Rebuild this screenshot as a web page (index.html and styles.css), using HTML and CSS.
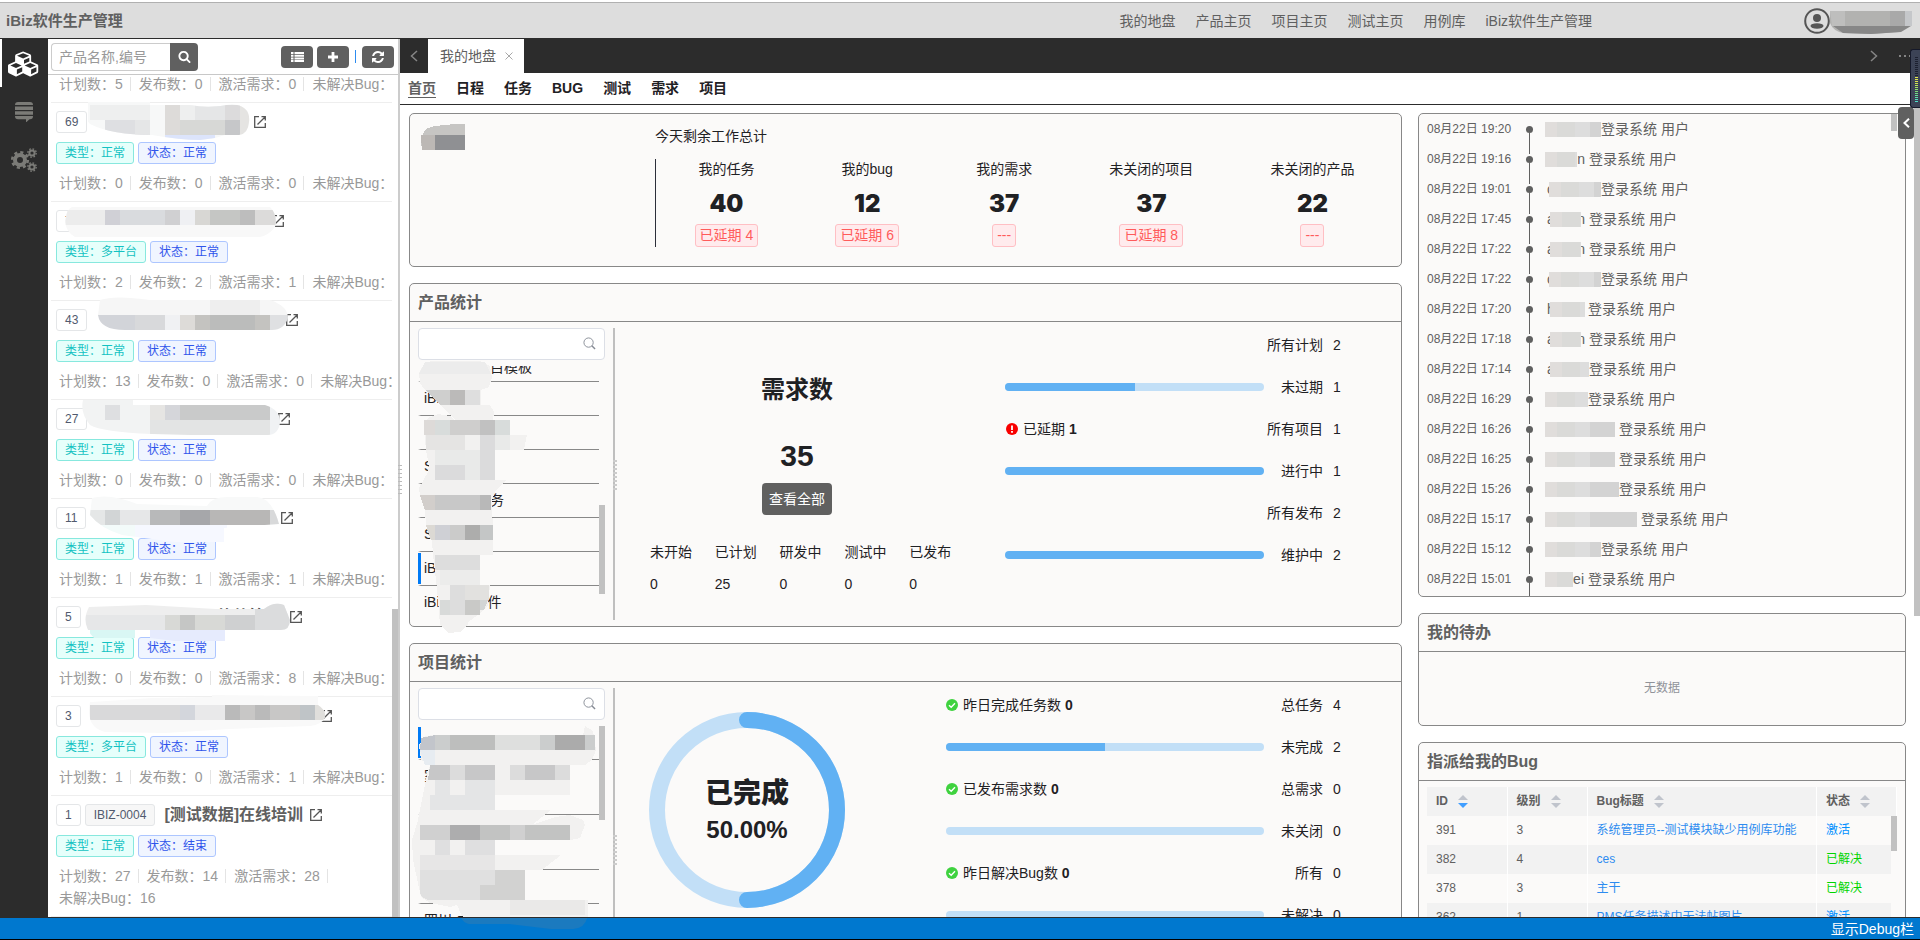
FILE: index.html
```html
<!DOCTYPE html>
<html lang="zh-CN">
<head>
<meta charset="utf-8">
<title>iBiz软件生产管理</title>
<link rel="stylesheet" href="styles.css">
</head>
<body>
<svg class="defs" width="0" height="0" aria-hidden="true">
  <defs>
    <symbol id="i-open" viewBox="0 0 12 12"><path d="M5 .7H.7v10.600h10.600V7M7.500.7h3.800v3.800M11.300.7 3.500 8.500" fill="none" stroke="currentColor" stroke-width="1.300"/></symbol>
    <symbol id="i-find" viewBox="0 0 14 14"><circle cx="6" cy="6" r="5" fill="none" stroke="currentColor"/><path d="M9.500 9.500 13 13" fill="none" stroke="currentColor" stroke-width="1.500"/></symbol>
    <symbol id="i-ok" viewBox="0 0 12 12"><circle cx="6" cy="6" r="6" fill="#3fd23f"/><path d="M3 6.200 5.200 8.300 9 4.300" fill="none" stroke="#fff" stroke-width="1.400"/></symbol>
    <symbol id="i-warn" viewBox="0 0 12 12"><circle cx="6" cy="6" r="6" fill="#f80000"/><path d="M6 2.500v4.500M6 8v1.700" stroke="#fff" stroke-width="1.800"/></symbol>
  </defs>
</svg>

<header class="topbar">
  <h1 class="brand">iBiz软件生产管理</h1>
  <nav class="topnav">
    <a href="#">我的地盘</a><a href="#">产品主页</a><a href="#">项目主页</a><a href="#">测试主页</a><a href="#">用例库</a><a href="#">iBiz软件生产管理</a>
  </nav>
  <div class="account">
    <svg width="26" height="26" viewBox="0 0 26 26"><circle cx="13" cy="13" r="11.800" fill="none" stroke="#555" stroke-width="2"/><circle cx="13" cy="10" r="4" fill="#555"/><ellipse cx="13" cy="18" rx="6.500" ry="2.700" fill="#555"/></svg>
    <svg width="83" height="23" viewBox="0 0 83 23"><path d="M0 0h81q4 14-12 21l-28 2-28-1Q3 20 0 12z" fill="#b2b2b0"/><path d="M0 0h15v15H2z" fill="#bebebd"/><path d="M60 0h15v15H60z" fill="#a9a9a9"/><path d="M75 0h7v15h-7z" fill="#c5c7ca"/><path d="M3 15h78l-10 6-30 2-28-1z" fill="#878787"/></svg>
  </div>
</header>

<div class="shell">
  <nav class="rail">
    <a class="rail-item active" href="#" aria-label="产品"><svg width="32" height="26" viewBox="0 0 2304 1792"><path fill="currentColor" fill-rule="evenodd" d="M640 1632l384 -192v-314l-384 164v342zM576 1178l404 -173l-404 -173l-404 173zM1664 1632l384 -192v-314l-384 164v342zM1600 1178l404 -173l-404 -173l-404 173zM1152 877l384 -165v-266l-384 164v267zM1088 496l441 -189l-441 -189l-441 189zM2176 1024v416q0 36 -19 67t-52 47l-448 224q-25 14 -57 14t-57 -14l-448 -224q-4 -2 -7 -4q-2 2 -7 4l-448 224q-25 14 -57 14t-57 -14l-448 -224q-33 -16 -52 -47t-19 -67v-416q0 -38 21.500 -70t56.500 -48l434 -186v-400q0 -38 21.500 -70t56.500 -48l448 -192q23 -10 50 -10t50 10l448 192q35 16 56.500 48t21.500 70v400l434 186q36 16 57 48t21 70z"/></svg></a>
    <a class="rail-item" href="#" aria-label="消息"><svg width="18" height="20" viewBox="0 0 18 20"><path fill="currentColor" d="M3 0h12q3 0 3 3H0q0-3 3-3zM0 4.500h18V8H0zM0 9.300h18v3.400H0zM0 14h18q0 3.200-3 3.200h-.5L11 20.500v-3.300H3q-3 0-3-3.200z"/></svg></a>
    <a class="rail-item" href="#" aria-label="设置"><svg width="26" height="24" viewBox="0 0 26 24" fill="none" stroke="currentColor"><circle cx="9" cy="12" r="5" stroke-width="4"/><circle cx="9" cy="12" r="7.800" stroke-width="2.600" stroke-dasharray="3.100 3.030"/><circle cx="21" cy="5" r="2.600" stroke-width="2"/><circle cx="21" cy="5" r="4.200" stroke-width="1.400" stroke-dasharray="1.650 1.650"/><circle cx="21" cy="19" r="2.600" stroke-width="2"/><circle cx="21" cy="19" r="4.200" stroke-width="1.400" stroke-dasharray="1.650 1.650"/></svg></a>
  </nav>

  <aside class="side">
    <div class="side-tools">
      <form class="search" onsubmit="return false">
        <input type="text" placeholder="产品名称,编号" aria-label="产品名称,编号">
        <button type="button" aria-label="搜索"><svg width="13" height="13" viewBox="0 0 1792 1792"><path fill="#fff" d="M1216 832q0-185-131.500-316.500t-316.500-131.500-316.500 131.500-131.500 316.500 131.500 316.500 316.500 131.500 316.500-131.500 131.500-316.500zm512 832q0 52-38 90t-90 38q-54 0-90-38l-343-342q-179 124-399 124-143 0-273.500-55.500t-225-150-150-225-55.500-273.500 55.500-273.500 150-225 225-150 273.500-55.500 273.500 55.500 225 150 150 225 55.500 273.500q0 220-124 399l343 343q37 37 37 90z"/></svg></button>
      </form>
      <div class="tool-set">
        <button type="button" class="tool" aria-label="列表"><svg width="13" height="10" viewBox="0 0 13 10"><path fill="#fff" d="M0 0h2.500v2H0zM3.500 0H13v2H3.500zM0 2.700h2.500v2H0zM3.500 2.700H13v2H3.500zM0 5.400h2.500v2H0zM3.500 5.400H13v2H3.500zM0 8.100h2.500v2H0zM3.500 8.100H13v2H3.500z"/></svg></button>
        <button type="button" class="tool" aria-label="新建"><svg width="10" height="10" viewBox="0 0 10 10"><path d="M5 0v10M0 5h10" stroke="#fff" stroke-width="2.800"/></svg></button>
        <i class="tool-sep"></i>
        <button type="button" class="tool" aria-label="刷新"><svg width="12" height="12" viewBox="128 128 1536 1536"><path fill="#fff" d="M1639 1056q0 5-1 7-64 268-268 434.500t-478 166.500q-146 0-282.500-55t-243.500-157l-129 129q-19 19-45 19t-45-19-19-45v-448q0-26 19-45t45-19h448q26 0 45 19t19 45-19 45l-137 137q71 66 161 102t187 36q134 0 250-65t186-179q11-17 53-117 8-23 30-23h192q13 0 22.500 9.500t9.500 22.500zm25-800v448q0 26-19 45t-45 19h-448q-26 0-45-19t-19-45 19-45l138-138q-148-137-349-137-134 0-250 65t-186 179q-11 17-53 117-8 23-30 23h-199q-13 0-22.500-9.500t-9.500-22.500v-7q65-268 270-434.500t480-166.500q146 0 284 55.500t245 156.500l130-129q19-19 45-19t45 19 19 45z"/></svg></button>
      </div>
    </div>
    <div class="side-list">
      <ul class="products">
        <li><div class="name"></div><div class="tags"></div><div class="nums"><span>计划数：5</span><span>发布数：0</span><span>激活需求：0</span><span>未解决Bug：</span></div></li>
        <li><div class="name"><b class="no">69</b><b class="code w160"></b><svg class="open"><use href="#i-open"/></svg></div><div class="tags"><b class="type">类型：正常</b><b class="state">状态：正常</b></div><div class="nums"><span>计划数：0</span><span>发布数：0</span><span>激活需求：0</span><span>未解决Bug：</span></div></li>
        <li><div class="name"><b class="no">70</b><b class="code w176"></b><svg class="open"><use href="#i-open"/></svg></div><div class="tags"><b class="type">类型：多平台</b><b class="state">状态：正常</b></div><div class="nums"><span>计划数：2</span><span>发布数：2</span><span>激活需求：1</span><span>未解决Bug：</span></div></li>
        <li><div class="name"><b class="no">43</b><b class="code w192"></b><svg class="open"><use href="#i-open"/></svg></div><div class="tags"><b class="type">类型：正常</b><b class="state">状态：正常</b></div><div class="nums"><span>计划数：13</span><span>发布数：0</span><span>激活需求：0</span><span>未解决Bug：</span></div></li>
        <li><div class="name"><b class="no">27</b><b class="code w184"></b><svg class="open"><use href="#i-open"/></svg></div><div class="tags"><b class="type">类型：正常</b><b class="state">状态：正常</b></div><div class="nums"><span>计划数：0</span><span>发布数：0</span><span>激活需求：0</span><span>未解决Bug：</span></div></li>
        <li><div class="name"><b class="no">11</b><b class="code w188"></b><svg class="open"><use href="#i-open"/></svg></div><div class="tags"><b class="type">类型：正常</b><b class="state">状态：正常</b></div><div class="nums"><span>计划数：1</span><span>发布数：1</span><span>激活需求：1</span><span>未解决Bug：</span></div></li>
        <li><div class="name"><b class="no">5</b><b class="code w200"></b><svg class="open"><use href="#i-open"/></svg></div><div class="tags"><b class="type">类型：正常</b><b class="state">状态：正常</b></div><div class="nums"><span>计划数：0</span><span>发布数：0</span><span>激活需求：8</span><span>未解决Bug：</span></div></li>
        <li><div class="name"><b class="no">3</b><b class="code w232"></b><svg class="open"><use href="#i-open"/></svg></div><div class="tags"><b class="type">类型：多平台</b><b class="state">状态：正常</b></div><div class="nums"><span>计划数：1</span><span>发布数：0</span><span>激活需求：1</span><span>未解决Bug：</span></div></li>
        <li><div class="name"><b class="no">1</b><b class="code">IBIZ-0004</b><strong>[测试数据]在线培训</strong><svg class="open"><use href="#i-open"/></svg></div><div class="tags"><b class="type">类型：正常</b><b class="state">状态：结束</b></div><div class="nums wrap"><span>计划数：27</span><span>发布数：14</span><span>激活需求：28</span><span>未解决Bug：16</span></div></li>
      </ul>
      <svg class="mask side-mask" width="350" height="842" viewBox="48 75 350 842" shape-rendering="crispEdges" aria-hidden="true">
        <clipPath id="a1"><path d="M88 102h62v3h40q20 4 42-1 19 2 17 18-1 12-10 13h-14l-10 3-15 2q-20 0-48-5-40 0-62-11-8-8-8-19z"/></clipPath>
        <g clip-path="url(#a1)"><path fill="#f7f8f8" d="M88 102h165v38H88z"/><path fill="#eeefef" d="M90 105h60v15H90zM180 105h15v15h-15z"/><path fill="#dddbd9" d="M165 105h15v30h-15z"/><path fill="#dedfe2" d="M105 120h45v15h-45z"/><path fill="#e5e6e7" d="M195 105h30v15h-30zM135 120h15v15h-15z"/><path fill="#d7d8d6" d="M180 120h45v15h-45z"/><path fill="#dcdbdc" d="M225 105h15v15h-15z"/><path fill="#c6c7c9" d="M225 120h15v15h-15z"/><path fill="#e5e4e2" d="M240 105h15v30h-15z"/><path fill="#dce4fb" d="M165 135h50v8h-50z"/></g>
        <clipPath id="a2"><path d="M72 207h198q8 8 5 20-6 8-15 10H75q-12-7-9-20 1-8 6-10z"/></clipPath>
        <g clip-path="url(#a2)"><path fill="#f8f8f8" d="M60 205h220v34H60z"/><path fill="#ececec" d="M60 210h45v15H60z"/><path fill="#d0d0d6" d="M105 210h15v15h-15z"/><path fill="#d9dbde" d="M120 210h45v15h-45z"/><path fill="#d0d0d2" d="M165 210h15v15h-15z"/><path fill="#eff0f3" d="M180 210h15v15h-15z"/><path fill="#d8d7d4" d="M195 210h15v15h-15z"/><path fill="#c5c6c4" d="M210 210h30v15h-30z"/><path fill="#bdbdbd" d="M240 210h15v15h-15z"/><path fill="#dcdbda" d="M255 210h25v15h-25z"/></g>
        <clipPath id="a3"><path d="M100 300q15-5 50 0h120q18 6 18 18-4 12-16 12H125q-25 0-27-15z"/></clipPath>
        <g clip-path="url(#a3)"><path fill="#f6f6f6" d="M90 295h200v20H90z"/><path fill="#eeeeee" d="M210 300h50v15h-50z"/><path fill="#d2d4d9" d="M90 315h45v15H90z"/><path fill="#d8d9db" d="M135 315h30v15h-30z"/><path fill="#f0f1f3" d="M165 315h15v15h-15z"/><path fill="#dddbd8" d="M180 315h15v15h-15z"/><path fill="#c4c3c0" d="M195 315h15v15h-15zM255 315h15v15h-15z"/><path fill="#bbbcbb" d="M210 315h45v15h-45z"/><path fill="#dfe0e2" d="M270 315h20v15h-20z"/></g>
        <clipPath id="a4"><path d="M83 400h50v5h132q16 5 15 18-2 12-12 12H190l-38-1q-50-2-62-9-10-12-7-25z"/></clipPath>
        <g clip-path="url(#a4)"><path fill="#f2f3f3" d="M82 399h70v36H82z"/><path fill="#dedfe1" d="M105 405h15v15h-15z"/><path fill="#e6e5e3" d="M150 405h15v15h-15z"/><path fill="#d5d6da" d="M165 405h15v15h-15z"/><path fill="#c9caca" d="M180 405h90v15h-90z"/><path fill="#e3e4e4" d="M150 420h120v16H150z"/><path fill="#f0f2f4" d="M270 405h13v31h-13z"/></g>
        <clipPath id="a5"><path d="M92 498q18-5 45 6l70 2q5-10 25-9h25q15 1 22 27l-55 4v14h-50l-52-7q-22-7-32-20z"/></clipPath>
        <g clip-path="url(#a5)"><path fill="#f8f9f9" d="M88 495h195v30H88z"/><path fill="#e5e7e7" d="M90 510h15v15H90z"/><path fill="#d2d5d6" d="M105 510h15v15h-15z"/><path fill="#e6e7e8" d="M120 510h30v15h-30z"/><path fill="#b8b9ba" d="M150 510h30v15h-30z"/><path fill="#a6a7aa" d="M180 510h30v15h-30z"/><path fill="#b8b7b6" d="M210 510h60v15h-60z"/><path fill="#d8d9da" d="M270 510h10v15h-10z"/><path fill="#f3fbfa" d="M90 525h45v18H90z"/><path fill="#f6f8ff" d="M135 525h92v18h-92z"/></g>
        <text class="remnant" x="217" y="622">软件管</text>
        <clipPath id="a6"><path d="M89 607l57-2 70 4h48q10-8 20-4l6 15q0 10-9 10h-56v11h-50l-25-3H94q-14-14-5-31z"/></clipPath>
        <g clip-path="url(#a6)"><path fill="#eeeeee" d="M84 602h210v14H84z"/><path fill="#e6e7e8" d="M84 615h81v15H84z"/><path fill="#d8d9d6" d="M165 615h60v15h-60z"/><path fill="#c5c6c5" d="M180 615h15v15h-15z"/><path fill="#cfd0d1" d="M225 615h30v15h-30z"/><path fill="#dbdcdd" d="M255 602h38v28h-38z"/><path fill="#d9f7f4" d="M90 630h45v15H90z"/><path fill="#e6ebfd" d="M150 630h75v12h-75z"/></g>
        <clipPath id="a7"><path d="M92 702l60-4 60-1v-2l106 1v9q8 5 7 12-3 8-15 9l-80 3-65 4-60-1q-20-5-15-30z"/></clipPath>
        <g clip-path="url(#a7)"><path fill="#f9f9f9" d="M88 694h240v42H88z"/><path fill="#d9d9da" d="M90 705h90v15H90z"/><path fill="#d3d6dc" d="M180 705h15v15h-15z"/><path fill="#e9e9ea" d="M195 705h30v15h-30z"/><path fill="#bababa" d="M225 705h15v15h-15zM255 705h15v15h-15z"/><path fill="#c8c7c6" d="M240 705h15v15h-15zM270 705h30v15h-30z"/><path fill="#bfc4c7" d="M300 705h15v15h-15z"/><path fill="#e0dfdc" d="M315 705h15v15h-15z"/></g>
      </svg>
      <i class="thumb side-thumb"></i>
    </div>
    <i class="grip side-grip"></i>
  </aside>

  <main class="main">
    <div class="tabs">
      <button type="button" class="arrow" aria-label="向左"><svg width="8" height="12" viewBox="0 0 8 12"><path d="M7 1 1.500 6 7 11" fill="none" stroke="#858585" stroke-width="1.500"/></svg></button>
      <div class="tab"><span>我的地盘</span><button type="button" aria-label="关闭"><svg width="8" height="8" viewBox="0 0 8 8"><path d="m.5.5 7 7m0-7-7 7" stroke="#a8a8a8"/></svg></button></div>
      <div class="tabs-end">
        <button type="button" class="arrow" aria-label="向右"><svg width="8" height="12" viewBox="0 0 8 12"><path d="m1 1 5.500 5L1 11" fill="none" stroke="#858585" stroke-width="1.500"/></svg></button>
        <button type="button" class="arrow" aria-label="更多"><svg width="14" height="2" viewBox="0 0 14 2"><path fill="#858585" d="M0 0h2v2H0zM5 0h2v2H5zM10 0h2v2h-2z"/></svg></button>
      </div>
    </div>
    <nav class="subnav"><a class="on" href="#">首页</a><a href="#">日程</a><a href="#">任务</a><a href="#">BUG</a><a href="#">测试</a><a href="#">需求</a><a href="#">项目</a></nav>

    <div class="board">
      <div class="col">
        <section class="card today">
          <svg class="user-mask" width="44" height="26" viewBox="0 0 44 26" shape-rendering="crispEdges"><path fill="#c6c5c3" d="M14 2 34 0h10v26H1q-3-17 6-22z"/><path fill="#bcb8b5" d="M0 11h14v15H1z"/><path fill="#8f9093" d="M14 11h30v15H14z"/></svg>
          <div class="today-main">
            <p>今天剩余工作总计</p>
            <ul>
              <li><span>我的任务</span><strong>40</strong><em>已延期 4</em></li>
              <li><span>我的bug</span><strong>12</strong><em>已延期 6</em></li>
              <li><span>我的需求</span><strong>37</strong><em>---</em></li>
              <li><span>未关闭的项目</span><strong>37</strong><em>已延期 8</em></li>
              <li><span>未关闭的产品</span><strong>22</strong><em>---</em></li>
            </ul>
          </div>
        </section>

        <section class="card stat">
          <h2>产品统计</h2>
          <div class="stat-body">
            <div class="picker">
              <div class="find"><input type="text" aria-label="搜索产品"><svg width="13" height="13"><use href="#i-find"/></svg></div>
              <ul class="pick-list cut">
                <li><i class="pad"></i>目模板</li><li>iBiz</li><li></li><li>S</li><li><i class="pad"></i>务</li><li>S</li><li class="on">iB</li><li>iBi<i class="pad near"></i>件</li>
              </ul>
              <svg class="mask pick-mask" width="204" height="312" viewBox="410 322 204 312" shape-rendering="crispEdges" aria-hidden="true">
                <path fill="#f2f1f0" d="M419 373L425 362 435 361H480L490 366 492 378 489 387 481 390V405H490L494 412 493 420H510V435H527L524 450H495V480H506L495 492 492 500V510L493 525V555H480V585H490L488 605 478 615 468 622V625L460 632 448 633 440 625 438 600 436 580 433 555 432 540 426 525 425 510 420 495 419 488 428 472 429 465 426 450 424 430 428 418 438 414 450 416 455 420 440 405 437 397 425 390 420 383z"/>
                <path fill="#ececec" d="M425 362h60l6 12H419z"/><path fill="#cfcfce" d="M425 390h25v15h-10z"/><path fill="#bbbab9" d="M450 390h15v15h-15z"/><path fill="#dedede" d="M465 390h15v15h-15z"/>
                <path fill="#dddad8" d="M424 420h11v15h-11z"/><path fill="#d8dcdb" d="M435 420h15v15h-15zM495 420h15v15h-15z"/><path fill="#cfcecd" d="M450 420h30v15h-30z"/><path fill="#c1c1c1" d="M480 420h15v15h-15z"/><path fill="#e5e4e3" d="M426 435h39v15h-39z"/><path fill="#e9eae9" d="M435 450h45v30h-45zM495 435h15v15h-15z"/><path fill="#dbdbdc" d="M480 435h15v45h-15zM435 465h30v15h-30z"/>
                <path fill="#d2cecb" d="M420 495h15v15h-10z"/><path fill="#c8c8c8" d="M435 495h45v15h-45z"/><path fill="#b8b8b8" d="M480 495h11v15h-11z"/><path fill="#dcd9d4" d="M426 525h9v15h-4z"/><path fill="#cfd0d5" d="M435 525h15v15h-15z"/><path fill="#cbcbca" d="M450 525h15v15h-15z"/><path fill="#adadac" d="M465 525h15v15h-15z"/><path fill="#c4c6c6" d="M480 525h13v15h-13z"/>
                <path fill="#dddddd" d="M435 555h45v15h-45zM450 585h15v30h-15z"/><path fill="#ececeb" d="M440 570h40v15h-40z"/><path fill="#d8dad9" d="M440 600h10v15h-10z"/><path fill="#e2e1df" d="M465 585h24v15h-24z"/><path fill="#c9c9c7" d="M465 600h15v15h-15z"/><path fill="#d2d5d5" d="M480 600h8l-4 10h-4z"/>
              </svg>
              <i class="thumb pick-thumb"></i><i class="grip"></i>
            </div>
            <div class="figure">
              <h3>需求数</h3>
              <strong>35</strong>
              <button type="button">查看全部</button>
              <dl>
                <div><dt>未开始</dt><dd>0</dd></div><div><dt>已计划</dt><dd>25</dd></div><div><dt>研发中</dt><dd>0</dd></div><div><dt>测试中</dt><dd>0</dd></div><div><dt>已发布</dt><dd>0</dd></div>
              </dl>
            </div>
            <div class="meters narrow">
              <div><span></span><label>所有计划</label><output>2</output></div>
              <div><i class="bar"><i style="width:50%"></i></i><label>未过期</label><output>1</output></div>
              <div><span class="warn"><svg width="12" height="12"><use href="#i-warn"/></svg>已延期 <b>1</b></span><label>所有项目</label><output>1</output></div>
              <div><i class="bar"><i style="width:100%"></i></i><label>进行中</label><output>1</output></div>
              <div><span></span><label>所有发布</label><output>2</output></div>
              <div><i class="bar"><i style="width:100%"></i></i><label>维护中</label><output>2</output></div>
            </div>
          </div>
        </section>

        <section class="card stat">
          <h2>项目统计</h2>
          <div class="stat-body">
            <div class="picker">
              <div class="find"><input type="text" aria-label="搜索项目"><svg width="13" height="13"><use href="#i-find"/></svg></div>
              <ul class="pick-list">
                <li class="on"></li><li class="tall">家</li><li class="tall"></li><li></li><li>四川·立</li>
              </ul>
              <svg class="mask pick-mask" width="204" height="245" viewBox="410 682 204 245" shape-rendering="crispEdges" aria-hidden="true">
                <path fill="#f2f1f0" d="M419 745L425 736 435 735H583L585 726 593 731 596 750 592 760 585 765H570V795H495V810H551L532 825 555 817 570 815 583 820 585 825 580 838 570 840H495V855H561L542 870H525V900H588V915L586 922 575 925H550L500 920H465L461 914 457 905 450 907 430 903 421 897 413 860 412 840 418 820 425 785 428 770 431 765 421 760z"/>
                <path fill="#c2c5cb" d="M421 738l14-3v15h-15z"/><path fill="#cbcdcd" d="M435 735h15v15h-15zM540 735h15v15h-15zM585 735h10v15h-10z"/><path fill="#bdbebd" d="M450 735h45v15h-45z"/><path fill="#dedfde" d="M495 735h45v15h-45z"/><path fill="#ababab" d="M555 735h30v15h-30z"/><path fill="#e7ecf1" d="M420 750h15v15h-10z"/>
                <path fill="#c7c7c8" d="M430 765h20v15h-22zM465 765h30v15h-30zM525 765h30v15h-30z"/><path fill="#dcdcdc" d="M450 765h15v15h-15zM510 765h15v15h-15zM555 765h15v15h-15z"/><path fill="#e4e5e6" d="M435 780h15v15h-15zM465 780h30v30h-30zM430 795h35v15h-35z"/>
                <path fill="#d0d0d0" d="M420 825h30v15h-30zM510 825h15v15h-15z"/><path fill="#adadae" d="M450 825h30v15h-30z"/><path fill="#c2c3c2" d="M480 825h30v15h-30zM525 825h45v15h-45z"/><path fill="#dfdfe0" d="M435 840h15v15h-15zM465 840h30v15h-30z"/><path fill="#e7e6e6" d="M420 855h75v15h-75z"/>
                <path fill="#e0e0e0" d="M420 870h75v30h-67q-8-3-8-8z"/><path fill="#d2d2d1" d="M495 870h30v30h-45v-15h15z"/><path fill="#eae9e8" d="M510 900h75v15h-75z"/>
              </svg>
              <i class="thumb pick-thumb first"></i><i class="grip"></i>
            </div>
            <div class="figure ring">
              <svg width="196" height="196" viewBox="0 0 196 196"><circle cx="98" cy="98" r="90" fill="none" stroke="#c2dff7" stroke-width="16"/><path d="M98 8a90 90 0 0 1 0 180" fill="none" stroke="#61b1f3" stroke-width="16" stroke-linecap="round"/></svg>
              <div class="ring-text"><b>已完成</b><span>50.00%</span></div>
            </div>
            <div class="meters">
              <div><span><svg width="12" height="12"><use href="#i-ok"/></svg>昨日完成任务数 <b>0</b></span><label>总任务</label><output>4</output></div>
              <div><i class="bar"><i style="width:50%"></i></i><label>未完成</label><output>2</output></div>
              <div><span><svg width="12" height="12"><use href="#i-ok"/></svg>已发布需求数 <b>0</b></span><label>总需求</label><output>0</output></div>
              <div><i class="bar"></i><label>未关闭</label><output>0</output></div>
              <div><span><svg width="12" height="12"><use href="#i-ok"/></svg>昨日解决Bug数 <b>0</b></span><label>所有</label><output>0</output></div>
              <div><i class="bar"></i><label>未解决</label><output>0</output></div>
            </div>
          </div>
        </section>
      </div>

      <div class="col">
        <section class="card feed">
          <ol>
            <li><time>08月22日 19:20</time><i class="dot"></i><span class="who m"><i></i></span>登录系统 用户</li>
            <li><time>08月22日 19:16</time><i class="dot"></i><span class="who"><i></i>n</span>登录系统 用户</li>
            <li><time>08月22日 19:01</time><i class="dot"></i><span class="who m tight">c<i></i></span>登录系统 用户</li>
            <li><time>08月22日 17:45</time><i class="dot"></i><span class="who tight">a<i></i>n</span>登录系统 用户</li>
            <li><time>08月22日 17:22</time><i class="dot"></i><span class="who tight">a<i></i>n</span>登录系统 用户</li>
            <li><time>08月22日 17:22</time><i class="dot"></i><span class="who m tight">c<i></i></span>登录系统 用户</li>
            <li><time>08月22日 17:20</time><i class="dot"></i><span class="who s tight">h<i></i>i</span>登录系统 用户</li>
            <li><time>08月22日 17:18</time><i class="dot"></i><span class="who tight">a<i></i>n</span>登录系统 用户</li>
            <li><time>08月22日 17:14</time><i class="dot"></i><span class="who tight">a<i></i></span>登录系统 用户</li>
            <li><time>08月22日 16:29</time><i class="dot"></i><span class="who s flush"><i></i></span>登录系统 用户</li>
            <li><time>08月22日 16:26</time><i class="dot"></i><span class="who l"><i></i></span>登录系统 用户</li>
            <li><time>08月22日 16:25</time><i class="dot"></i><span class="who l"><i></i></span>登录系统 用户</li>
            <li><time>08月22日 15:26</time><i class="dot"></i><span class="who l flush"><i></i></span>登录系统 用户</li>
            <li><time>08月22日 15:17</time><i class="dot"></i><span class="who xl"><i></i></span>登录系统 用户</li>
            <li><time>08月22日 15:12</time><i class="dot"></i><span class="who m"><i></i></span>登录系统 用户</li>
            <li><time>08月22日 15:01</time><i class="dot"></i><span class="who s"><i></i>ei</span>登录系统 用户</li>
          </ol>
          <i class="thumb feed-thumb"></i>
        </section>
        <section class="card todo"><h2>我的待办</h2><p>无数据</p></section>
        <section class="card bugs">
          <h2>指派给我的Bug</h2>
          <div class="table-box">
            <table>
              <colgroup><col class="c1"><col class="c1"><col><col class="c4"><col class="c5"></colgroup>
              <thead><tr><th>ID<i class="sort down"></i></th><th>级别<i class="sort"></i></th><th>Bug标题<i class="sort"></i></th><th>状态<i class="sort"></i></th><th></th></tr></thead>
              <tbody>
                <tr><td>391</td><td>3</td><td><a href="#">系统管理员--测试模块缺少用例库功能</a></td><td class="act">激活</td><td></td></tr>
                <tr><td>382</td><td>4</td><td><a href="#">ces</a></td><td class="done">已解决</td><td></td></tr>
                <tr><td>378</td><td>3</td><td><a href="#">主干</a></td><td class="done">已解决</td><td></td></tr>
                <tr><td>362</td><td>1</td><td><a href="#">PMS任务描述中无法帖图片</a></td><td class="act">激活</td><td></td></tr>
              </tbody>
            </table>
            <i class="thumb table-thumb"></i>
          </div>
        </section>
      </div>
    </div>
    <i class="thumb main-thumb"></i>
    <button type="button" class="drawer" aria-label="展开"><svg width="7" height="10" viewBox="0 0 7 10"><path d="M6 .8 1.500 5 6 9.200" fill="none" stroke="#fff" stroke-width="2"/></svg></button>
    <div class="level"><i></i></div>
  </main>
</div>
<footer class="foot">
  <svg class="foot-mask" width="126" height="11" viewBox="0 0 126 11" aria-hidden="true"><path fill="#1b7abf" d="M0 0h126q-2 10-14 11H90L48 6H8Q3 5 0 0z"/></svg>
  <a href="#">显示Debug栏</a>
</footer>
</body>
</html>
```
FILE: styles.css
```css
* { box-sizing: border-box; }
body, h1, h2, h3, p, ul, ol, dl, dd { margin: 0; padding: 0; }
ul, ol { list-style: none; }
i, em { font-style: normal; }
a { color: inherit; text-decoration: none; }
button, input { font: inherit; margin: 0; padding: 0; border: 0; background: none; color: inherit; }
svg { display: block; flex: none; }
body {
  display: flex; flex-direction: column; height: 100vh; overflow: hidden;
  font: 14px/22px "Liberation Sans", "Noto Sans CJK SC", sans-serif;
  color: #1f2124; background: #fff;
}
.defs { position: absolute; }
.mask { position: absolute; left: 0; pointer-events: none; }
.thumb { position: absolute; width: 6px; background: #c1c1c1; }

/* top bar */
.topbar {
  display: flex; align-items: center; height: 36px; margin-top: 2px; padding: 0 7px 0 6px; flex: none;
  background: #ddd; border-top: 1px solid #b0b0b0; color: #606060;
}
.brand { font-size: 15px; font-weight: 700; }
.topnav { display: flex; gap: 20px; margin-left: auto; padding-right: 212px; }
.account { display: flex; align-items: center; }
.account svg + svg { align-self: flex-end; }

.shell { display: flex; flex: 1; min-height: 0; border-top: 1px solid #2c2c2c; border-bottom: 1px solid #2c2c2c; }
.rail { width: 48px; flex: none; background: #2c2c2c; color: #7b7b77; }
.rail-item { display: flex; align-items: center; justify-content: center; height: 48px; padding-top: 2px; border-left: 2px solid transparent; }
.rail-item svg { margin-right: 2px; }
.rail-item.active { color: #fff; border-color: #fff; }

/* product sidebar */
.side { position: relative; display: flex; flex-direction: column; width: 352px; flex: none; border-right: 2px solid #ccc; }
.side-tools {
  display: flex; align-items: center; justify-content: space-between; height: 36px; flex: none;
  padding: 0 4px 0 3px; border-bottom: 1px solid #c8c8c8;
}
.search { display: flex; height: 28px; }
.search input { width: 119px; padding: 0 7px; border: 1px solid #ccc; border-right: 0; border-radius: 4px 0 0 4px; background: #fff; }
.search input::placeholder { color: #999; opacity: 1; }
.search button { display: flex; align-items: center; justify-content: center; width: 28px; background: #606060; border-radius: 0 4px 4px 0; }
.tool-set { display: flex; align-items: center; gap: 4px; }
.tool { display: flex; align-items: center; justify-content: center; width: 32px; height: 22px; background: #606060; border-radius: 4px; }
.tool-sep { width: 1px; height: 13px; margin: 0 2px; background: #2d8cf0; }
.side-list { position: relative; display: flex; flex-direction: column; justify-content: flex-end; flex: 1; min-height: 0; overflow: hidden; }
.products { padding: 0 6px 0 3px; }
.products li { padding: 8px 0 7px 5px; border-bottom: 1px solid #eee; }
.name, .tags { display: flex; align-items: center; gap: 4px; height: 22px; margin-bottom: 9px; }
.tags { margin-bottom: 8px; }
.name b, .tags b { height: 22px; padding: 0 8px; border: 1px solid #e4e6e8; border-radius: 3px; font-size: 12px; font-weight: 400; line-height: 20px; color: #515a6e; }
.name .code { background: #f7f7f7; }
.name strong { padding-left: 5px; font-size: 16px; color: #606060; }
.open { width: 12px; height: 12px; margin-left: 3px; color: #555; }
.w160 { width: 156px; } .w176 { width: 174px; } .w192 { width: 188px; } .w184 { width: 180px; }
.w188 { width: 184px; } .w200 { width: 198px; } .w232 { width: 228px; }
.name .w160, .name .w176, .name .w192, .name .w184, .name .w188, .name .w200, .name .w232 { background: none; border-color: transparent; }
.tags .type { color: #13c2c2; background: #e6fffb; border-color: #87e8de; }
.tags .state { color: #2f54eb; background: #f0f5ff; border-color: #adc6ff; }
.nums { display: flex; margin-left: -5px; overflow: hidden; white-space: nowrap; color: #999; }
.nums.wrap { flex-wrap: wrap; }
.nums span { position: relative; flex: none; padding: 0 8px; }
.nums span:not(:last-child)::after { content: ""; position: absolute; right: 0; top: 4px; height: 14px; border-right: 1px solid #e4e4e4; }
.side-mask { bottom: 0; }
.remnant { font-size: 16px; font-weight: 700; fill: #555; }
.side-thumb { right: 0; bottom: 0; height: 308px; }
.grip { position: absolute; right: -4px; top: 132px; width: 4px; height: 30px; background: repeating-linear-gradient(#bbb 0 1px, transparent 1px 4px); z-index: 1; }
.side-grip { top: 426px; }

/* tabs */
.main { position: relative; display: flex; flex-direction: column; flex: 1; min-width: 0; }
.tabs { display: flex; height: 34px; flex: none; background: #2c2c2c; }
.arrow { display: flex; align-items: center; justify-content: center; width: 28px; }
.tab { display: flex; align-items: center; gap: 9px; padding: 0 11px 0 12px; background: #fff; color: #606060; }
.tabs-end { display: flex; gap: 4px; margin-left: auto; }
.subnav { display: flex; gap: 20px; height: 32px; flex: none; padding: 5px 8px 0; border-bottom: 1px solid #2c2c2c; font-weight: 700; }
.subnav a { height: 20px; line-height: 20px; }
.subnav .on { color: #606060; border-bottom: 1px solid #606060; }

/* dashboard */
.board {
  display: grid; grid-template-columns: 993fr 488fr; gap: 16px; align-items: start;
  flex: 1; min-height: 0; overflow: hidden; padding: 8px 14px 0 9px;
}
.col { display: flex; flex-direction: column; gap: 16px; min-width: 0; }
.card { position: relative; border: 1px solid #888; border-radius: 5px; background: #fbfaf9; }
.card h2 { height: 38px; padding: 0 8px; border-bottom: 1px solid #888; font-size: 16px; line-height: 37px; color: #606060; }
.today { display: flex; padding: 10px 8px 19px 11px; }
.today-main { width: 738px; flex: none; margin-left: auto; }
.today-main p { line-height: 24px; margin-bottom: 11px; }
.today ul { display: flex; justify-content: space-around; border-left: 1px solid #2c2f3a; }
.today li { display: flex; flex-direction: column; align-items: center; }
.today li span { line-height: 20px; }
.today strong { margin: 9px 0 4px; font: 900 24px/32px Inter, "Liberation Sans", sans-serif; }
.today em { padding: 0 4px; border: 1px solid #ffbfc4; border-radius: 3px; background: #ffebed; color: #ff5b5b; line-height: 21px; }

.stat-body { display: flex; height: 304px; }
.picker { position: relative; display: flex; flex-direction: column; width: 205px; flex: none; margin: 6px 0; padding: 0 8px; border-right: 2px solid #bfbfbf; }
.find { position: relative; height: 32px; flex: none; }
.find input { width: 100%; height: 32px; padding: 0 32px 0 8px; border: 1px solid #dcdfe6; border-radius: 4px; background: #fff; }
.find svg { position: absolute; right: 9px; top: 9px; color: #858a94; }
.pick-list { flex: 1; min-height: 0; overflow: hidden; margin-top: 6px; padding-right: 6px; }
.pick-list li { height: 34px; padding: 1px 3px; border-bottom: 1px solid #888; border-left: 3px solid transparent; line-height: 30px; white-space: nowrap; }
.pick-list .tall { height: 55px; }
.pick-list li.on { position: relative; }
.pick-list li.on::before { content: ""; position: absolute; left: -3px; top: 1px; width: 3px; height: 31px; background: #007af5; }
.pick-list li:last-child { border-bottom: 0; }
.cut li:first-child { height: 16px; line-height: 1px; }
.pad { display: inline-block; width: 66px; }
.near { width: 48px; }
.pick-mask { top: -6px; }
.pick-thumb { right: 8px; top: 177px; height: 89px; z-index: 1; }
.pick-thumb.first { top: 38px; height: 94px; }
.picker .grip { background: repeating-linear-gradient(#ccc 0 2px, transparent 2px 4px); }
.picker .first + .grip { top: 147px; }

.figure { display: flex; flex-direction: column; align-items: center; width: 354px; flex: none; margin-left: 5px; padding-top: 50px; }
.figure h3 { font-size: 24px; line-height: 36px; }
.figure strong { margin: 29px 0 8px; font-size: 30px; line-height: 38px; }
.figure button { height: 32px; padding: 0 7px; border-radius: 4px; background: #606060; color: #fff; }
.figure dl { display: grid; grid-template-columns: repeat(5, 1fr); align-self: stretch; margin-top: 26px; padding-left: 30px; }
.figure dd { margin-top: 10px; }
.ring { position: relative; width: 296px; margin-left: 4px; padding: 30px 0 0 30px; align-items: flex-start; }
.ring-text { position: absolute; left: 30px; top: 31px; display: flex; flex-direction: column; align-items: center; justify-content: center; width: 196px; height: 196px; font-weight: 700; }
.ring-text b { font-size: 28px; line-height: 38px; }
.ring-text span { font-size: 24px; line-height: 34px; }
.meters { flex: 1; padding: 2px 60px 0 0; }
.ring ~ .meters { margin-left: 31px; }
.meters.narrow { margin-left: 31px; }
.meters > div { display: flex; align-items: center; height: 42px; }
.meters label { width: 59px; text-align: right; }
.meters output { margin-left: 10px; min-width: 8px; }
.meters span { flex: 1; display: flex; align-items: center; white-space: pre; }
.meters span svg { margin-right: 5px; }
.meters .warn { padding-left: 1px; }
.bar { flex: 1; height: 8px; border-radius: 4px; overflow: hidden; background: #c2dff7; }
.bar i { display: block; height: 8px; background: #61b1f3; }

/* activity feed */
.feed { height: 484px; overflow: hidden; color: #606060; }
.feed ol { padding-left: 8px; }
.feed li { position: relative; display: flex; align-items: center; height: 30px; white-space: pre; }
.feed time { width: 99px; font-size: 12px; }
.dot { position: relative; width: 7px; height: 7px; margin-right: 14px; border-radius: 50%; background: #606060; }
.dot::after { content: ""; position: absolute; left: 3px; top: 7px; height: 21px; border-left: 1px solid #606060; }
.who { display: flex; align-items: center; width: 42px; flex: none; padding-right: 4px; }
.who i { flex: 1; height: 15px; margin-left: -2px; z-index: 1; background: linear-gradient(90deg, #e0dddb 0 12px, #dadad8 12px 30px, #dddddd 30px 45px, #d3d3d3 45px); }
.who i:not(:last-child), .who.tight i { margin-right: -4px; }
.tight i { margin-left: -5px; }
.who.flush { padding-right: 0; }
.who.s { width: 41px; } .who.m { width: 54px; padding-right: 0; } .who.l { width: 72px; } .who.xl { width: 94px; }
.who.m.tight i { margin-right: 0; }
.feed-thumb { right: 8px; top: 0; height: 17px; }
.todo p { padding: 24px 0 25px; text-align: center; font-size: 12px; line-height: 24px; color: #909399; }

/* bug table */
.table-box { position: relative; padding: 6px 8px; }
table { width: 100%; table-layout: fixed; border-collapse: collapse; font-size: 12px; color: #606060; }
.c1 { width: 80px; } .c4 { width: 74px; } .c5 { width: 6px; }
th, td { height: 29px; padding: 0 0 2px 9px; text-align: left; line-height: 20px; white-space: nowrap; border-right: 1px solid #fff; }
th { background: #f2f2f2; }
th:nth-child(4), td:nth-child(4), td:nth-child(5) { border-right: 0; }
th:nth-child(5), td:nth-child(5) { padding: 0; }
tbody tr:nth-child(even) td:not(:last-child) { background: #f2f2f2; }
td a { color: #2d8cf0; }
.act { color: #0090ff; } .done { color: #00d500; }
.sort { display: inline-grid; gap: 3px; margin-left: 10px; vertical-align: middle; }
.sort::before, .sort::after { content: ""; border: 5px solid transparent; }
.sort::before { border-top: 0; border-bottom-color: #c0c4cc; }
.sort::after { border-bottom: 0; border-top-color: #c0c4cc; }
.sort.down::after { border-top-color: #409eff; }
.table-thumb { right: 8px; top: 35px; height: 35px; }

.main-thumb { right: 0; top: 69px; height: 508px; }
.drawer { position: absolute; right: 6px; top: 68px; display: flex; align-items: center; justify-content: center; width: 16px; height: 32px; border-radius: 4px; background: #606060; }
.level { position: absolute; right: 0; top: 10px; width: 10px; height: 59px; padding: 7px 2px 6px 4px; border: 1px solid #15192a; border-right: 0; border-radius: 3px 0 0 3px; background: #3c4356; }
.level i { display: block; height: 45px; background: repeating-linear-gradient(transparent 0 1px, #3c4356 1px 2px), linear-gradient(#1c2030 0 19px, #dfe64a 19px 25px, #7ddf70 34px, #4adfd0); }

.foot { position: relative; display: flex; align-items: center; justify-content: flex-end; height: 22px; flex: none; padding-right: 6px; border-bottom: 1px solid #000; background: #0078cf; color: #fff; }
.foot-mask { position: absolute; left: 461px; top: 0; }
```
